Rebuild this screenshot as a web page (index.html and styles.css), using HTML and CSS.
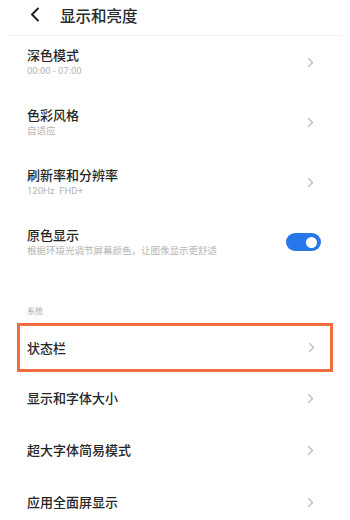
FILE: index.html
```html
<!DOCTYPE html>
<html lang="zh">
<head>
<meta charset="utf-8">
<link rel="stylesheet" href="styles.css">
</head>
<body>
<div class="header">
  <svg class="back" width="10" height="15" viewBox="0 0 10 15"><path d="M8 1.5 L2 7.5 L8 13.5" fill="none" stroke="#222" stroke-width="2" stroke-linecap="round" stroke-linejoin="round"/></svg>
  <span class="htitle">显示和亮度</span>
</div>
<div class="list">
  <div class="row two first">
    <div class="text"><div class="title">深色模式</div><div class="sub">00:00 - 07:00</div></div>
    <svg class="chev" width="7" height="11" viewBox="0 0 7 11"><path d="M1.5 1.5 L5.5 5.5 L1.5 9.5" fill="none" stroke="#bdbdbd" stroke-width="1.3" stroke-linecap="round" stroke-linejoin="round"/></svg>
  </div>
  <div class="row two">
    <div class="text"><div class="title">色彩风格</div><div class="sub">自适应</div></div>
    <svg class="chev" width="7" height="11" viewBox="0 0 7 11"><path d="M1.5 1.5 L5.5 5.5 L1.5 9.5" fill="none" stroke="#bdbdbd" stroke-width="1.3" stroke-linecap="round" stroke-linejoin="round"/></svg>
  </div>
  <div class="row two">
    <div class="text"><div class="title">刷新率和分辨率</div><div class="sub">120Hz&nbsp;&nbsp;FHD+</div></div>
    <svg class="chev" width="7" height="11" viewBox="0 0 7 11"><path d="M1.5 1.5 L5.5 5.5 L1.5 9.5" fill="none" stroke="#bdbdbd" stroke-width="1.3" stroke-linecap="round" stroke-linejoin="round"/></svg>
  </div>
  <div class="row two">
    <div class="text"><div class="title">原色显示</div><div class="sub">根据环境光调节屏幕颜色，让图像显示更舒适</div></div>
    <div class="toggle"><div class="knob"></div></div>
  </div>
  <div class="section">系统</div>
  <div class="row highlight">
    <div class="title">状态栏</div>
    <svg class="chev" width="7" height="11" viewBox="0 0 7 11"><path d="M1.5 1.5 L5.5 5.5 L1.5 9.5" fill="none" stroke="#bdbdbd" stroke-width="1.3" stroke-linecap="round" stroke-linejoin="round"/></svg>
  </div>
  <div class="row one">
    <div class="title">显示和字体大小</div>
    <svg class="chev" width="7" height="11" viewBox="0 0 7 11"><path d="M1.5 1.5 L5.5 5.5 L1.5 9.5" fill="none" stroke="#bdbdbd" stroke-width="1.3" stroke-linecap="round" stroke-linejoin="round"/></svg>
  </div>
  <div class="row one">
    <div class="title">超大字体简易模式</div>
    <svg class="chev" width="7" height="11" viewBox="0 0 7 11"><path d="M1.5 1.5 L5.5 5.5 L1.5 9.5" fill="none" stroke="#bdbdbd" stroke-width="1.3" stroke-linecap="round" stroke-linejoin="round"/></svg>
  </div>
  <div class="row one">
    <div class="title">应用全面屏显示</div>
    <svg class="chev" width="7" height="11" viewBox="0 0 7 11"><path d="M1.5 1.5 L5.5 5.5 L1.5 9.5" fill="none" stroke="#bdbdbd" stroke-width="1.3" stroke-linecap="round" stroke-linejoin="round"/></svg>
  </div>
</div>
</body>
</html>
```
FILE: styles.css
```css
html, body {
  margin: 0;
  padding: 0;
  background: #fff;
  font-family: "Noto Sans CJK SC", "Noto Sans", sans-serif;
  color: #2b2b2b;
  overflow: hidden;
}
.header {
  height: 36px;
  margin: 0 8px;
  padding: 0 0 6px 22px;
  box-sizing: border-box;
  display: flex;
  align-items: center;
  gap: 20px;
  border-bottom: 1px solid #f1f1f1;
}
.back { display: block; }
.htitle {
  font-size: 15.5px;
  line-height: 18px;
  font-weight: 500;
  color: #2a2a2a;
}
.row {
  display: flex;
  align-items: center;
  justify-content: space-between;
  box-sizing: border-box;
  padding: 0 36px 0 27px;
}
.row.two { height: 60px; }
.row.two.first { height: 56px; padding-bottom: 4px; }
.row.one { height: 52px; }
.title {
  font-size: 13px;
  line-height: 16px;
  font-weight: 500;
  color: #262626;
}
.sub {
  margin-top: 1px;
  font-size: 9.5px;
  line-height: 13px;
  color: #b4b4b4;
  font-family: "Roboto", "Noto Sans CJK SC", sans-serif;
}
.chev { display: block; }
.toggle {
  width: 35px;
  height: 18px;
  border-radius: 9px;
  background: #2877ea;
  display: flex;
  align-items: center;
  justify-content: flex-end;
  padding-right: 4px;
  box-sizing: border-box;
  margin-right: -7px;
}
.knob {
  width: 11px;
  height: 11px;
  border-radius: 50%;
  background: #fff;
}
.section {
  margin-top: 33px;
  padding-left: 27px;
  font-size: 8px;
  line-height: 12px;
  color: #a8a8a8;
}
.row.highlight {
  margin: 6px 17px 0 17px;
  height: 49px;
  border: 3px solid #ef6c3c;
  padding: 0 15px 0 7px;
}
```
